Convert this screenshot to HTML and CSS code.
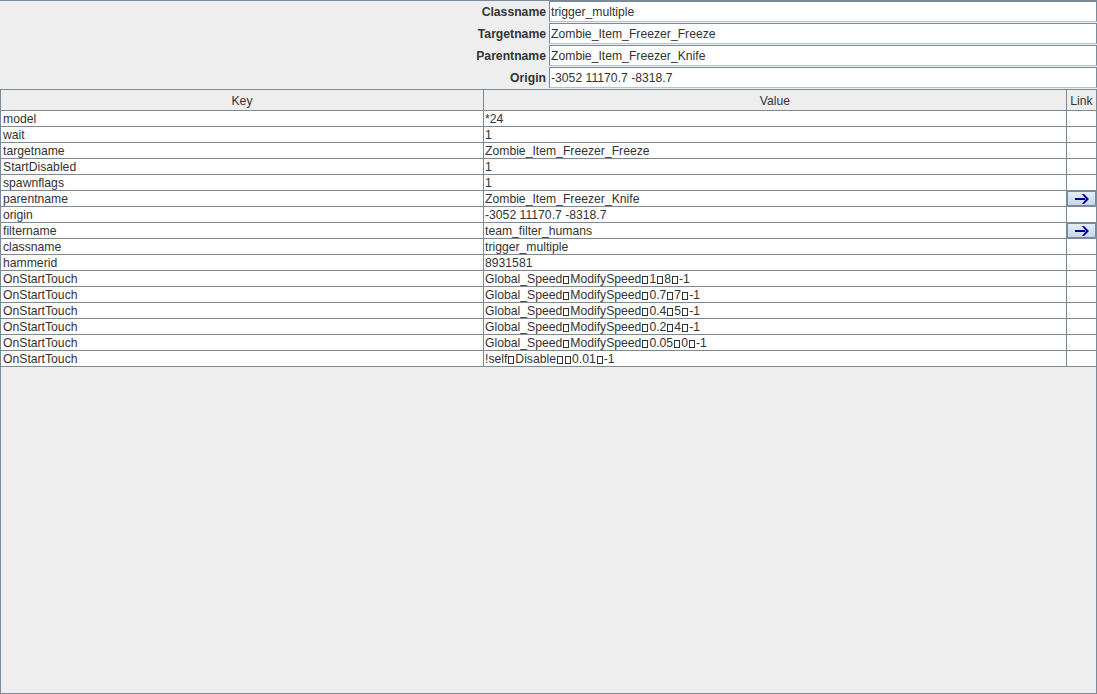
FILE: index.html
```html
<!DOCTYPE html>
<html>
<head>
<meta charset="utf-8">
<link rel="stylesheet" href="styles.css">
</head>
<body>
<div class="top">
  <div class="lbl">Classname</div><div class="fld">trigger_multiple</div>
  <div class="lbl">Targetname</div><div class="fld">Zombie_Item_Freezer_Freeze</div>
  <div class="lbl">Parentname</div><div class="fld">Zombie_Item_Freezer_Knife</div>
  <div class="lbl">Origin</div><div class="fld">-3052 11170.7 -8318.7</div>
</div>
<div class="pane">
  <div class="row head"><div class="c">Key</div><div class="c">Value</div><div class="c">Link</div></div>
  <div class="row"><div class="c">model</div><div class="c">*24</div><div class="c"></div></div>
  <div class="row"><div class="c">wait</div><div class="c">1</div><div class="c"></div></div>
  <div class="row"><div class="c">targetname</div><div class="c">Zombie_Item_Freezer_Freeze</div><div class="c"></div></div>
  <div class="row"><div class="c">StartDisabled</div><div class="c">1</div><div class="c"></div></div>
  <div class="row"><div class="c">spawnflags</div><div class="c">1</div><div class="c"></div></div>
  <div class="row"><div class="c">parentname</div><div class="c">Zombie_Item_Freezer_Knife</div><div class="c"><div class="btn"><svg width="14" height="10" viewBox="0 0 14 10"><path d="M0 4h10v2H0z" fill="#00008b"/><path d="M7 0h2l5 5-5 5H7l4-5z" fill="#00008b"/></svg></div></div></div>
  <div class="row"><div class="c">origin</div><div class="c">-3052 11170.7 -8318.7</div><div class="c"></div></div>
  <div class="row"><div class="c">filtername</div><div class="c">team_filter_humans</div><div class="c"><div class="btn"><svg width="14" height="10" viewBox="0 0 14 10"><path d="M0 4h10v2H0z" fill="#00008b"/><path d="M7 0h2l5 5-5 5H7l4-5z" fill="#00008b"/></svg></div></div></div>
  <div class="row"><div class="c">classname</div><div class="c">trigger_multiple</div><div class="c"></div></div>
  <div class="row"><div class="c">hammerid</div><div class="c">8931581</div><div class="c"></div></div>
  <div class="row"><div class="c">OnStartTouch</div><div class="c">Global_Speed<span class="x"></span>ModifySpeed<span class="x"></span>1<span class="x"></span>8<span class="x"></span>-1</div><div class="c"></div></div>
  <div class="row"><div class="c">OnStartTouch</div><div class="c">Global_Speed<span class="x"></span>ModifySpeed<span class="x"></span>0.7<span class="x"></span>7<span class="x"></span>-1</div><div class="c"></div></div>
  <div class="row"><div class="c">OnStartTouch</div><div class="c">Global_Speed<span class="x"></span>ModifySpeed<span class="x"></span>0.4<span class="x"></span>5<span class="x"></span>-1</div><div class="c"></div></div>
  <div class="row"><div class="c">OnStartTouch</div><div class="c">Global_Speed<span class="x"></span>ModifySpeed<span class="x"></span>0.2<span class="x"></span>4<span class="x"></span>-1</div><div class="c"></div></div>
  <div class="row"><div class="c">OnStartTouch</div><div class="c">Global_Speed<span class="x"></span>ModifySpeed<span class="x"></span>0.05<span class="x"></span>0<span class="x"></span>-1</div><div class="c"></div></div>
  <div class="row"><div class="c">OnStartTouch</div><div class="c">!self<span class="x"></span>Disable<span class="x"></span><span class="x"></span>0.01<span class="x"></span>-1</div><div class="c"></div></div>
</div>
</body>
</html>
```
FILE: styles.css
```css
html, body {
  margin: 0;
  padding: 0;
  background: #eeeeee;
  font-family: "Liberation Sans", Arial, sans-serif;
  font-size: 12.2px;
  color: #333333;
}
.top {
  border-top: 1px solid #7a8a99;
  display: grid;
  grid-template-columns: 546px 1fr;
  column-gap: 3px;
  row-gap: 1px;
  grid-auto-rows: 21px;
  padding-bottom: 1px;
}
.lbl {
  font-weight: bold;
  text-align: right;
  line-height: 21px;
  padding-top: 1px;
  box-sizing: border-box;
}
.fld {
  background: #ffffff;
  border: 1px solid #7a8a99;
  border-bottom-color: #b8c2cc;
  padding: 1px 0 0 1px;
  line-height: 18px;
  white-space: nowrap;
  overflow: hidden;
}
.pane {
  border: 1px solid #7a8a99;
  height: 603px;
}
.row {
  display: grid;
  grid-template-columns: 483px 583px 1fr;
  height: 16px;
  background: #ffffff;
}
.row .c {
  box-sizing: border-box;
  height: 16px;
  border-right: 1px solid #7a8a99;
  border-bottom: 1px solid #7a8a99;
  line-height: 15px;
  padding: 1px 0 0 2px;
  white-space: nowrap;
  overflow: hidden;
}
.row .c:nth-child(2) {
  padding-left: 1px;
}
.row .c:last-child {
  border-right: none;
  padding: 0;
}
.row.head {
  height: 21px;
  background: #eeeeee;
}
.row.head .c {
  height: 21px;
  line-height: 18px;
  text-align: center;
  padding: 2px 0 0 0;
}
.x {
  display: inline-block;
  width: 6px;
  height: 8px;
  border: 1px solid #333333;
  margin: 0 1px;
  vertical-align: -1px;
  box-sizing: border-box;
}
.btn {
  border: 1px solid #7a8a99;
  background: linear-gradient(#e6eef7, #c4d6ea);
  display: flex;
  align-items: center;
  justify-content: center;
  box-sizing: border-box;
  height: 15px;
}
```
